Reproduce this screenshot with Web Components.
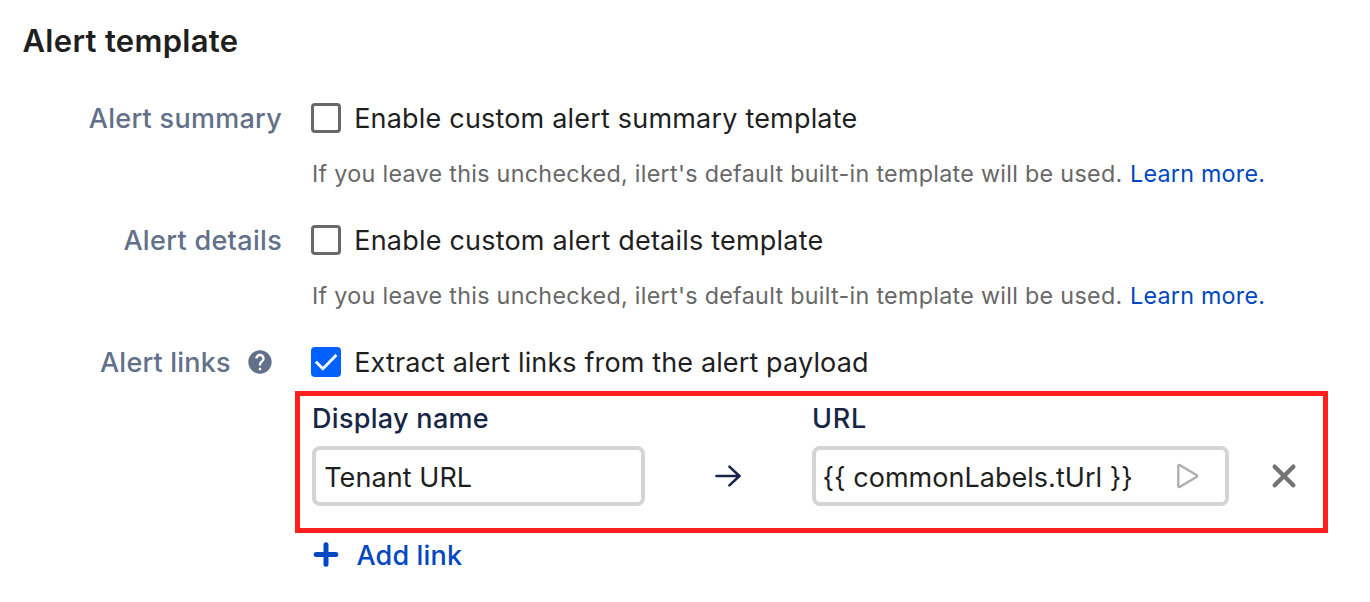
<!DOCTYPE html>
<html lang="en">
<head>
<meta charset="utf-8">
<title>Alert template</title>
<style>
body { margin: 0; background: #fff; font-family: Inter, "Liberation Sans", sans-serif; }
</style>
</head>
<body>
<alert-template-form></alert-template-form>

<template id="t-row">
<style>
:host { display: grid; grid-template-columns: 282px 1fr; column-gap: 29px; }
.label { height: 30px; display: flex; justify-content: flex-end; align-items: center; font: 500 27px/31px Inter, sans-serif; color: #62708a; white-space: nowrap; }
.body { display: flex; flex-direction: column; align-items: flex-start; }
</style>
<div class="label"><slot name="label"></slot></div>
<div class="body"><slot></slot></div>
</template>

<template id="t-check">
<style>
:host { display: flex; height: 30px; align-items: center; gap: 13.2px; font-size: 27px; line-height: 31px; color: #1f1f1f; white-space: nowrap; }
.box { box-sizing: border-box; width: 30px; height: 30px; border: 3px solid #686868; border-radius: 4px; }
svg { display: none; width: 30px; height: 30px; }
:host([checked]) .box { border: 0; background: #0061ff; }
:host([checked]) svg { display: block; }
</style>
<div class="box"><svg viewBox="0 0 30 30"><path d="M4.9 14.8l7 6.900L25.400 8" fill="none" stroke="#fff" stroke-width="2.900"/></svg></div>
<span><slot></slot></span>
</template>

<template id="t-hint">
<style>
:host { display: block; margin-top: 25px; padding-left: 1px; height: 30px; font-size: 23.3px; line-height: 31px; color: #686868; white-space: nowrap; }
.text { letter-spacing: .3px; }
a { color: #0047c2; text-decoration: none; letter-spacing: .23px; margin-left: 7.6px; }
</style>
<span class="text"><slot></slot></span><a>Learn more.</a>
</template>

<template id="t-field">
<style>
:host { display: flex; flex-direction: column; color: #172546; }
.name { font: 500 27px/31px Inter, sans-serif; height: 30px; white-space: nowrap; }
.input { box-sizing: border-box; margin-top: 13px; height: 60px; border: 4px solid #d2d4d6; border-radius: 8px; padding: 2px 23px 0 8.2px; display: flex; align-items: center; justify-content: space-between; font-size: 27px; line-height: 31px; color: #1f1f1f; white-space: nowrap; }
</style>
<div class="name"><slot name="name"></slot></div>
<div class="input"><slot></slot></div>
</template>

<template id="t-links">
<style>
:host { box-sizing: border-box; width: 1033px; height: 142px; margin: 14px 0 0 -16px; border: 5px solid #ff1f1c; padding: 7px 0 0 12px; display: flex; align-items: flex-start; }
link-field:first-of-type { width: 333px; }
link-field:last-of-type { width: 417px; }
svg { display: block; flex: none; }
.arrow { width: 167px; padding-top: 57px; display: flex; justify-content: center; }
.remove { padding: 59px 0 0 41px; }
.play { margin-top: -2px; }
</style>
<link-field><span slot="name" style="letter-spacing:.3px">Display name</span><span style="letter-spacing:.07px">Tenant URL</span></link-field>
<div class="arrow"><svg width="32" height="32" viewBox="0 0 32 32"><path d="M3.500 16H26.600M16.400 6.600l10 9.400-10 9.400" fill="none" stroke="#172546" stroke-width="2.600" stroke-linecap="round" stroke-linejoin="round"/></svg></div>
<link-field><span slot="name" style="letter-spacing:.7px">URL</span><span style="letter-spacing:.03px;margin-left:-1.7px">{{ commonLabels.tUrl }}</span><svg class="play" width="28" height="28" viewBox="0 0 28 28"><path d="M4.300 4.200Q4.300 2.200 6 3.200L22.400 13q1.600 1 0 2L6 24.800q-1.700 1-1.700-1z" fill="none" stroke="#adadad" stroke-width="2.300" stroke-linejoin="round"/></svg></link-field>
<div class="remove"><svg width="28" height="28" viewBox="0 0 28 28"><path d="M4.700 4.700L23.300 23.300M23.300 4.700L4.700 23.300" stroke="#737373" stroke-width="4.400" stroke-linecap="round"/></svg></div>
</template>

<template id="t-add">
<style>
:host { display: flex; align-items: center; gap: 16.500px; height: 30px; margin: 7px 0 0 1px; color: #0047c2; font-size: 27px; line-height: 31px; letter-spacing: .15px; font-weight: 450; white-space: nowrap; }
svg { display: block; }
</style>
<svg width="28" height="28" viewBox="0 0 28 28"><path d="M14 3.700v19.600M4.200 13.500h19.600" stroke="currentColor" stroke-width="5" stroke-linecap="round"/></svg>
<span><slot></slot></span>
</template>

<template id="t-form">
<style>
:host { display: block; height: 602px; overflow: hidden; }
h2 { margin: 0; padding: 21px 0 42px 22.500px; font: 600 31px/40px Inter, sans-serif; letter-spacing: .3px; color: #1f1f1f; }
form-row { min-height: 122px; }
.help { display: block; margin: 0 8px 0 15.200px; }
</style>
<h2>Alert template</h2>
<form-row><span slot="label" style="letter-spacing:.28px">Alert summary</span>
<check-option><span style="letter-spacing:.19px">Enable custom alert summary template</span></check-option>
<hint-line>If you leave this unchecked, ilert's default built-in template will be used.</hint-line></form-row>
<form-row><span slot="label" style="letter-spacing:.32px">Alert details</span>
<check-option><span style="letter-spacing:.21px">Enable custom alert details template</span></check-option>
<hint-line>If you leave this unchecked, ilert's default built-in template will be used.</hint-line></form-row>
<form-row><span slot="label" style="letter-spacing:.2px">Alert links</span><svg slot="label" class="help" width="28" height="28" viewBox="0 0 24 24"><path fill="#62708a" d="M12 2C6.480 2 2 6.480 2 12s4.480 10 10 10 10-4.480 10-10S17.520 2 12 2zm1 17h-2v-2h2v2zm2.070-7.750l-.9.920C13.450 12.900 13 13.500 13 15h-2v-.5c0-1.100.45-2.100 1.170-2.830l1.240-1.260c.37-.36.59-.86.59-1.410 0-1.100-.9-2-2-2s-2 .9-2 2H8c0-2.210 1.790-4 4-4s4 1.790 4 4c0 .88-.36 1.680-.93 2.250z"/></svg>
<check-option checked><span style="letter-spacing:.13px">Extract alert links from the alert payload</span></check-option>
<link-editor></link-editor>
<add-link>Add link</add-link></form-row>
</template>

<script>
const define = (name, id) => customElements.define(name, class extends HTMLElement {
  constructor() {
    super();
    this.attachShadow({ mode: 'open' }).append(document.getElementById(id).content.cloneNode(true));
  }
});
define('form-row', 't-row');
define('check-option', 't-check');
define('hint-line', 't-hint');
define('link-field', 't-field');
define('link-editor', 't-links');
define('add-link', 't-add');
define('alert-template-form', 't-form');
</script>
</body>
</html>
